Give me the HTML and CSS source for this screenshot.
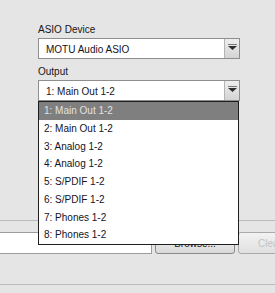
FILE: index.html
```html
<!DOCTYPE html>
<html lang="en">
<head>
  <meta charset="UTF-8">
  <title>ASIO Settings</title>
  <link rel="stylesheet" href="styles.css">
</head>
<body>
  <div class="device-panel">
    <div class="field">
      <div class="field-label">ASIO Device</div>
      <div class="select">
        <span class="select-value">MOTU Audio ASIO</span>
        <span class="select-arrow">
          <svg width="9" height="6" viewBox="0 0 9 6"><rect x="0" y="0" width="9" height="1" fill="#7a7a7a"/><polygon points="0,2 9,2 4.5,6" fill="#2e2e2e"/></svg>
        </span>
      </div>
    </div>
    <div class="field">
      <div class="field-label">Output</div>
      <div class="select">
        <span class="select-value">1: Main Out 1-2</span>
        <span class="select-arrow">
          <svg width="9" height="6" viewBox="0 0 9 6"><rect x="0" y="0" width="9" height="1" fill="#7a7a7a"/><polygon points="0,2 9,2 4.5,6" fill="#2e2e2e"/></svg>
        </span>
        <ul class="options">
          <li class="selected">1: Main Out 1-2</li>
          <li>2: Main Out 1-2</li>
          <li>3: Analog 1-2</li>
          <li>4: Analog 1-2</li>
          <li>5: S/PDIF 1-2</li>
          <li>6: S/PDIF 1-2</li>
          <li>7: Phones 1-2</li>
          <li>8: Phones 1-2</li>
        </ul>
      </div>
    </div>
  </div>

  <div class="file-panel">
    <div class="file-row">
      <input type="text" class="file-path">
      <button class="btn">Browse...</button>
      <button class="btn btn-clear" disabled>Clear</button>
    </div>
  </div>
</body>
</html>
```

FILE: styles.css
```css
body {
  margin: 0;
  background-color: #e5e5e5;
  font-family: "Liberation Sans", Arial, sans-serif;
  font-size: 10px;
  color: #161616;
  overflow: hidden;
}
.device-panel {
  height: 220px;
  box-sizing: border-box;
  padding: 24px 0 0 38px;
}
.field + .field {
  margin-top: 7px;
}
.field-label {
  line-height: 12px;
  margin-bottom: 2px;
}
.select {
  position: relative;
  display: flex;
  width: 202px;
  height: 21px;
  box-sizing: border-box;
  border: 1px solid #8e8e8e;
  background: white;
}
.select-value {
  flex: 1;
  padding-left: 7px;
  line-height: 21px;
  height: 19px;
  overflow: hidden;
  color: #141424;
}
.select-arrow {
  width: 15px;
  border-left: 1px solid #b4b4b4;
  background: linear-gradient(#eeeeee, #d4d4d4);
  display: flex;
  justify-content: center;
  align-items: flex-start;
  padding-top: 5px;
  box-sizing: border-box;
}
.select-arrow svg {
  display: block;
}
.options {
  position: absolute;
  top: calc(100% + 1px);
  left: -1px;
  width: 201px;
  box-sizing: border-box;
  margin: 0;
  padding: 0;
  list-style: none;
  background: white;
  border: 1px solid #1e1e1e;
  z-index: 2;
}
.options li {
  height: 17.75px;
  line-height: 17.75px;
  padding-left: 5px;
  color: #141424;
}
.options li.selected {
  background-color: #7f7f7f;
  color: #e2e2e2;
}
.file-panel {
  border-top: 1px solid #bababa;
  border-bottom: 1px solid #bababa;
  padding: 11px 0 30px;
}
.file-row {
  display: flex;
  gap: 3px;
  height: 22px;
}
.file-path {
  margin: 0 0 0 -4px;
  width: 156px;
  height: 22px;
  box-sizing: border-box;
  border: 1px solid #9c9c9c;
  border-radius: 0;
  background: white;
  padding: 0;
  flex-shrink: 0;
}
.btn {
  flex-shrink: 0;
  width: 80px;
  height: 22px;
  padding: 0;
  font-family: inherit;
  font-size: 10px;
  color: #161616;
  border: 1px solid #8a8a8a;
  border-radius: 3px;
  background: linear-gradient(#f7f7f7, #d9d9d9);
}
.btn-clear {
  width: 64px;
}
.btn:disabled {
  color: #c2c2c2;
  border-color: #a9a9a9;
  background: linear-gradient(#f2f2f2, #e0e0e0);
}
```
